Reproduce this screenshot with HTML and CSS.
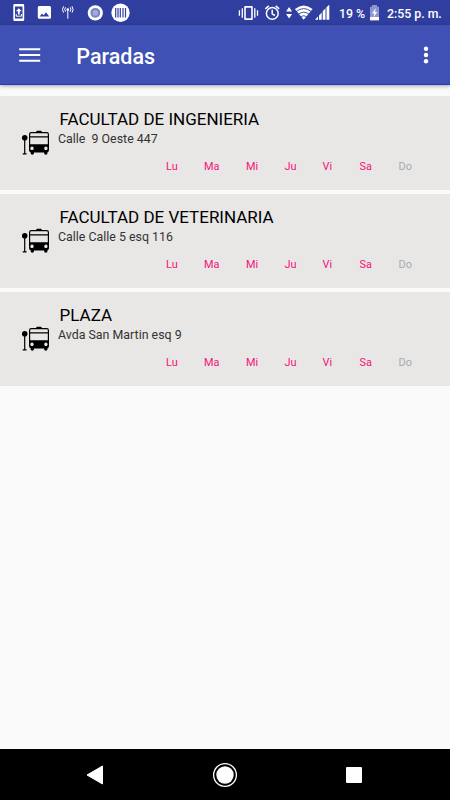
FILE: index.html
```html
<!DOCTYPE html>
<html lang="es">
<head>
<meta charset="utf-8">
<title>Paradas</title>
<link rel="stylesheet" href="styles.css">
</head>
<body>
<svg class="defs" width="0" height="0">
  <symbol id="bus" viewBox="0 0 28 26">
    <circle cx="2.7" cy="7.8" r="2.8"/>
    <path d="M2.1 8h1.2v15.2h1.3v1.3H.7v-1.3h1.4z"/>
    <path fill-rule="evenodd" d="M14.3 2V1.500q0-.8.8-.8h3.800q.8 0 .8.8V2h5q2.300 0 2.300 2.300V20q0 2-1.500 2.300V23q0 1.700-1.700 1.700T22.100 23v-.6H12V23q0 1.700-1.700 1.700T8.600 23v-.8Q7 22 7 20V4.300Q7 2 9.300 2zM9.200 3.200Q8.200 3.200 8.200 4.200V6.300H25.800V4.200Q25.800 3.200 24.800 3.200zM8.200 7.500V14.300H25.800V7.500zM10 16.600a1.700 1.700 0 1 0 .01 0zM23.900 16.600a1.700 1.700 0 1 0 .01 0z"/>
  </symbol>
</svg>
<div class="screen">
  <div class="status">
    <svg class="status-left" width="140" height="25" viewBox="0 0 140 25" fill="#fff">
      <path fill-rule="evenodd" d="M14.500 4h8.500q1.200 0 1.200 1.200v14.600q0 1.200-1.200 1.200h-8.500q-1.200 0-1.200-1.200V5.200q0-1.200 1.200-1.200zM15 6.500v12h7.500v-12z"/>
      <path d="M18.800 8.200l3 3h-2.100v3.300h-1.800v-3.300h-2.100z"/>
      <path d="M16.200 14v2.200h5.200V14" fill="none" stroke="#fff"/>
      <path fill-rule="evenodd" d="M39.300 6h10.200q1.500 0 1.500 1.500v9.800q0 1.500-1.500 1.500H39.300q-1.500 0-1.500-1.500V7.500Q37.800 6 39.300 6zM39.700 16.600h9.500L46 12.300l-2.300 3-1.700-1.900z"/>
      <g fill="none" stroke="#fff" stroke-width="1"><path d="M67.800 10v8.800M65.500 7.300q-1.600 2.100 0 4.300M70.100 7.300q1.600 2.100 0 4.300M63.600 6.300q-2.200 3.200 0 6.400M72 6.300q2.200 3.200 0 6.400"/></g>
      <circle cx="67.800" cy="9.500" r="1.300"/>
      <circle cx="95.300" cy="12.800" r="7.600"/><circle cx="95.300" cy="12.800" r="4.900" fill="#7982c8"/><circle cx="95.300" cy="12.800" r="2.900" fill="#a2a8da"/>
      <circle cx="120.500" cy="12.800" r="9.200"/>
      <path d="M115.700 8v9.500M118 8v9.500M120.300 8v9.500M123 8v9.500M125.500 8v9.500" stroke="#303f9f" stroke-width="1.200"/>
    </svg>
    <svg class="status-right" width="96" height="25" viewBox="236 0 96 25" fill="#fff">
      <path fill-rule="evenodd" d="M245.300 6h6.400q1.100 0 1.100 1.100v11.800q0 1.100-1.100 1.100h-6.400q-1.100 0-1.100-1.100V7.100q0-1.100 1.100-1.100zM245.800 7.700v10.600h5.400V7.700z"/>
      <path d="M242.300 8.200v9.600M239.400 10.300v5.400M254.800 8.200v9.600M257.500 10.300v5.400" stroke="#fff" stroke-width="1.300"/>
      <g fill="none" stroke="#fff" stroke-width="1.500"><circle cx="272.300" cy="13.400" r="5.900"/><path d="M272.200 9.800v4l2.700 1.700M265.300 8.800l3.500-2.900M279.200 8.800l-3.500-2.900"/></g>
      <path d="M289.100 7l3 4.500h-6zM289.100 18.600l3-4.500h-6z"/>
      <path d="M303.700 19.800L294.900 9q8.800-7.200 17.700 0z"/>
      <path d="M296.300 11.400q7.400-5.600 14.900 0M298.500 14.100q5.200-3.800 10.400 0M300.700 16.700q3-2 6 0" fill="none" stroke="#303f9f" stroke-width=".9"/>
      <path d="M315 19.800l3-3.300v3.300zM319 19.800v-4.400l2.700-3v7.400zM322.700 19.800v-8.500l2.800-3v11.500zM326.500 19.800V7.300l2.800-2.600v15.100z"/>
    </svg>
    <span class="percent">19 %</span>
    <svg class="battery" width="12" height="16" viewBox="0 0 12 16"><path d="M1 1.700h2V0h5v1.700h2v13.600H1z" fill="#8d95cf"/><path d="M1 12h9v3.300H1z" fill="#fff"/><path d="M6.800 3L3 8.500h2.300L4.500 12.500 8.200 7H6z" fill="#fff"/></svg>
    <span class="clock">2:55 p. m.</span>
  </div>
  <header class="bar">
    <svg class="menu" width="22" height="16" viewBox="0 0 22 16"><path d="M.2 2.300h21M.2 8h21M.2 13.800h21" stroke="#fff" stroke-width="1.900"/></svg>
    <h1>Paradas</h1>
    <svg class="more" width="6" height="18" viewBox="0 0 6 18" fill="#fff"><circle cx="3" cy="2.800" r="2.200"/><circle cx="3" cy="9" r="2.200"/><circle cx="3" cy="15.300" r="2.200"/></svg>
  </header>
  <main class="list">
    <article class="card">
      <svg class="bus"><use href="#bus"/></svg>
      <div class="info"><h2>FACULTAD DE INGENIERIA</h2><p class="address">Calle&nbsp; 9 Oeste 447</p>
      <div class="days"><span>Lu</span><span>Ma</span><span>Mi</span><span>Ju</span><span>Vi</span><span>Sa</span><span class="off">Do</span></div></div>
    </article>
    <article class="card">
      <svg class="bus"><use href="#bus"/></svg>
      <div class="info"><h2>FACULTAD DE VETERINARIA</h2><p class="address">Calle Calle 5 esq 116</p>
      <div class="days"><span>Lu</span><span>Ma</span><span>Mi</span><span>Ju</span><span>Vi</span><span>Sa</span><span class="off">Do</span></div></div>
    </article>
    <article class="card">
      <svg class="bus"><use href="#bus"/></svg>
      <div class="info"><h2>PLAZA</h2><p class="address">Avda San Martin esq 9</p>
      <div class="days"><span>Lu</span><span>Ma</span><span>Mi</span><span>Ju</span><span>Vi</span><span>Sa</span><span class="off">Do</span></div></div>
    </article>
  </main>
  <nav class="nav">
    <svg width="18" height="22" viewBox="0 0 18 22"><path d="M1 11L16.500 2v18z" fill="#fff" stroke="#fff" stroke-linejoin="round"/></svg>
    <svg width="26" height="26" viewBox="0 0 26 26"><circle cx="13" cy="13" r="11.400" fill="none" stroke="#fff" stroke-width="1.300"/><circle cx="13" cy="13" r="8.700" fill="#fff"/></svg>
    <svg width="18" height="18" viewBox="0 0 18 18"><rect x="1" y="1" width="16" height="16" rx="1" fill="#fff"/></svg>
  </nav>
</div>
</body>
</html>
```
FILE: styles.css
```css
* { box-sizing: border-box; }
body { margin: 0; font-family: Roboto, "Liberation Sans", sans-serif; background: #fafafa; }
svg { display: block; flex: none; }
h1, h2, p { margin: 0; }
.defs { position: absolute; }
.screen { display: flex; flex-direction: column; width: 450px; height: 800px; overflow: hidden; }
.status { display: flex; align-items: center; flex: none; height: 25px; background: #303f9f; color: #fff; font-size: 12.300px; font-weight: 500; line-height: 25px; white-space: nowrap; }
.status-right { margin-left: 96px; }
.percent { width: 30px; margin-left: 7px; padding-top: 3px; }
.battery { margin-left: 0; }
.clock { margin-left: 6px; padding-top: 3px; }
.bar { display: flex; align-items: center; flex: none; height: 60px; padding: 0 21px 0 19px; background: #3f51b5; border-bottom: 1px solid #1d3fb4; box-shadow: 0 1px 4px rgba(0, 0, 0, .35); color: #fff; }
.bar h1 { margin-left: 35.300px; padding-top: 4px; font-size: 21.500px; font-weight: 500; line-height: 28px; }
.more { margin: 1px 0 0 auto; }
.list { display: flex; flex-direction: column; flex: 1; gap: 4.200px; padding-top: 11px; }
.card { display: flex; height: 94px; background: #e8e7e5; }
.bus { width: 28px; height: 26px; margin: 34px 0 0 22px; }
.info { margin-left: 8px; color: #000; }
.info h2 { margin: 12px 0 0 1.500px; font-size: 17px; font-weight: 400; line-height: 22px; white-space: nowrap; }
.address { font-size: 12.400px; line-height: 18px; color: #333; }
.days { display: grid; grid-template-columns: 38px 42px 38.500px 38px 37px 39px 20px; margin: 10.500px 0 0 108px; font-size: 10.900px; line-height: 16px; color: #f5117a; }
.days .off { color: #aaa; }
.nav { display: flex; align-items: center; justify-content: space-between; flex: none; height: 51px; padding: 0 87px 0 86px; background: #000; }
```
